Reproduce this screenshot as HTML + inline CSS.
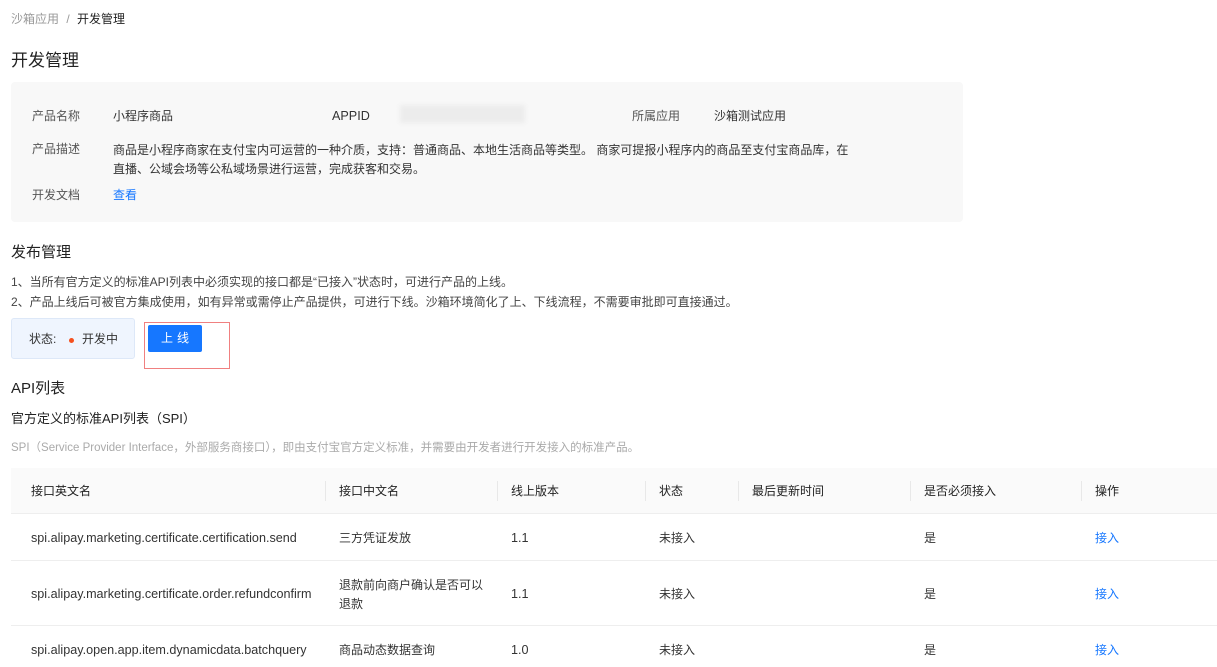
<!DOCTYPE html>
<html><head><meta charset="utf-8"><style>
*{margin:0;padding:0;box-sizing:border-box}
body{width:1217px;height:667px;overflow:hidden;background:#fff;font-family:"Liberation Sans","Noto Sans CJK SC",sans-serif;color:#333;font-size:12px;position:relative}
.a{position:absolute;white-space:nowrap;line-height:16px}
.blue{color:#1677ff}
.th{position:absolute;top:468px;left:11px;width:1206px;height:46px;background:#fafafa;border-bottom:1px solid #eee}
.row{position:absolute;left:11px;width:1206px;border-bottom:1px solid #eee}
.sep{position:absolute;top:481px;width:1px;height:20px;background:#e8e8e8}
.s{font-size:12.6px}
</style></head><body>
<div class="a" style="left:11px;top:11px;color:#999">沙箱应用 <span style="margin:0 4px">/</span> <span style="color:#222">开发管理</span></div>
<div class="a" style="left:11px;top:50px;font-size:17px;line-height:22px;color:#222">开发管理</div>
<div class="a" style="left:11px;top:82px;width:952px;height:140px;background:#f8f8f8;border-radius:4px"></div>
<div class="a" style="left:32px;top:108px;color:#555">产品名称</div>
<div class="a" style="left:113px;top:108px">小程序商品</div>
<div class="a s" style="left:332px;top:108px">APPID</div>
<div class="a" style="left:400px;top:105px;width:125px;height:18px;background:#ececec;filter:blur(2px)"></div>
<div class="a" style="left:632px;top:108px;color:#555">所属应用</div>
<div class="a" style="left:714px;top:108px">沙箱测试应用</div>
<div class="a" style="left:32px;top:141px;color:#555">产品描述</div>
<div class="a" style="left:113px;top:141px;line-height:19px">商品是小程序商家在支付宝内可运营的一种介质，支持：普通商品、本地生活商品等类型。 商家可提报小程序内的商品至支付宝商品库，在<br>直播、公域会场等公私域场景进行运营，完成获客和交易。</div>
<div class="a" style="left:32px;top:187px;color:#555">开发文档</div>
<div class="a blue" style="left:113px;top:187px">查看</div>
<div class="a" style="left:11px;top:243px;font-size:15px;line-height:20px;color:#222">发布管理</div>
<div class="a" style="left:11px;top:272px;line-height:20px;color:#444">1、当所有官方定义的标准API列表中必须实现的接口都是“已接入”状态时，可进行产品的上线。<br>2、产品上线后可被官方集成使用，如有异常或需停止产品提供，可进行下线。沙箱环境简化了上、下线流程，不需要审批即可直接通过。</div>
<div class="a" style="left:11px;top:318px;width:124px;height:41px;background:#eff5fe;border:1px solid #dde8f8;border-radius:3px"></div>
<div class="a" style="left:29px;top:331px">状态:</div>
<div class="a" style="left:69px;top:338px;width:5px;height:5px;border-radius:50%;background:#f5501e"></div>
<div class="a" style="left:82px;top:331px">开发中</div>
<div class="a" style="left:144px;top:322px;width:86px;height:47px;border:1px solid #f08080"></div>
<div class="a" style="left:148px;top:325px;width:54px;height:27px;background:#1677ff;border-radius:2px;color:#fff;text-align:center;line-height:27px;letter-spacing:4px;padding-left:4px">上线</div>
<div class="a" style="left:11px;top:379px;font-size:15px;line-height:20px;color:#222">API列表</div>
<div class="a" style="left:11px;top:410px;font-size:13px;line-height:18px;color:#222">官方定义的标准API列表（SPI）</div>
<div class="a" style="left:11px;top:440px;color:#aaa;font-size:11.5px">SPI（Service Provider Interface，外部服务商接口），即由支付宝官方定义标准，并需要由开发者进行开发接入的标准产品。</div>
<div class="th"></div>
<div class="sep" style="left:325px"></div><div class="sep" style="left:497px"></div><div class="sep" style="left:645px"></div><div class="sep" style="left:738px"></div><div class="sep" style="left:910px"></div><div class="sep" style="left:1081px"></div>
<div class="a" style="left:31px;top:483px;color:#222">接口英文名</div>
<div class="a" style="left:339px;top:483px;color:#222">接口中文名</div>
<div class="a" style="left:511px;top:483px;color:#222">线上版本</div>
<div class="a" style="left:659px;top:483px;color:#222">状态</div>
<div class="a" style="left:752px;top:483px;color:#222">最后更新时间</div>
<div class="a" style="left:924px;top:483px;color:#222">是否必须接入</div>
<div class="a" style="left:1095px;top:483px;color:#222">操作</div>
<div class="row" style="top:514px;height:47px"></div>
<div class="row" style="top:561px;height:65px"></div>
<div class="a s" style="left:31px;top:530px">spi.alipay.marketing.certificate.certification.send</div>
<div class="a" style="left:339px;top:530px">三方凭证发放</div>
<div class="a s" style="left:511px;top:530px">1.1</div><div class="a" style="left:659px;top:530px">未接入</div><div class="a" style="left:924px;top:530px">是</div><div class="a blue" style="left:1095px;top:530px">接入</div>
<div class="a s" style="left:31px;top:586px">spi.alipay.marketing.certificate.order.refundconfirm</div>
<div class="a" style="left:339px;top:576px;line-height:19px">退款前向商户确认是否可以<br>退款</div>
<div class="a s" style="left:511px;top:586px">1.1</div><div class="a" style="left:659px;top:586px">未接入</div><div class="a" style="left:924px;top:586px">是</div><div class="a blue" style="left:1095px;top:586px">接入</div>
<div class="a s" style="left:31px;top:642px">spi.alipay.open.app.item.dynamicdata.batchquery</div>
<div class="a" style="left:339px;top:642px">商品动态数据查询</div>
<div class="a s" style="left:511px;top:642px">1.0</div><div class="a" style="left:659px;top:642px">未接入</div><div class="a" style="left:924px;top:642px">是</div><div class="a blue" style="left:1095px;top:642px">接入</div>
</body></html>
